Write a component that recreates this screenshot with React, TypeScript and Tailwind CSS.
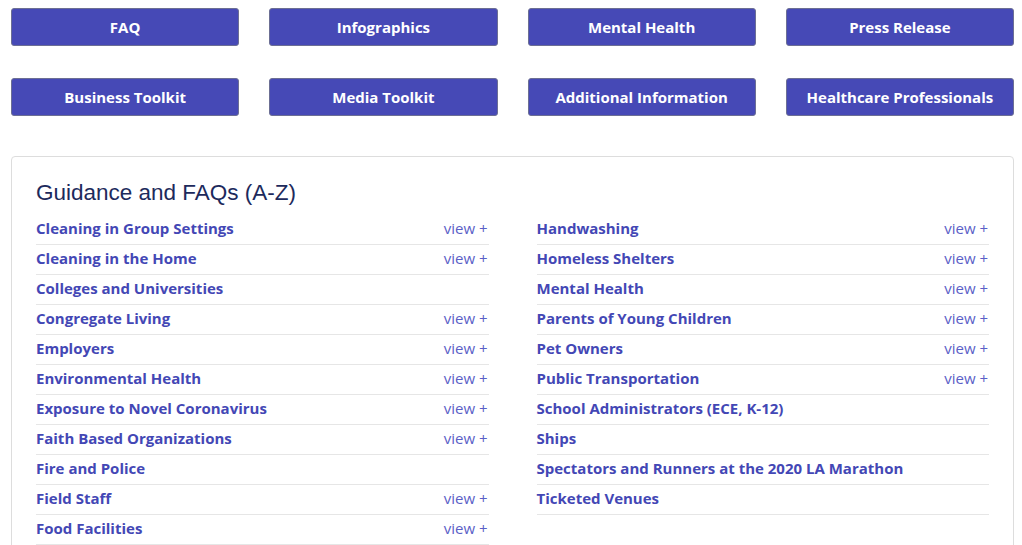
import React from "react";

const buttons = [
  "FAQ",
  "Infographics",
  "Mental Health",
  "Press Release",
  "Business Toolkit",
  "Media Toolkit",
  "Additional Information",
  "Healthcare Professionals",
];

type Item = { label: string; view?: boolean };

const left: Item[] = [
  { label: "Cleaning in Group Settings", view: true },
  { label: "Cleaning in the Home", view: true },
  { label: "Colleges and Universities" },
  { label: "Congregate Living", view: true },
  { label: "Employers", view: true },
  { label: "Environmental Health", view: true },
  { label: "Exposure to Novel Coronavirus", view: true },
  { label: "Faith Based Organizations", view: true },
  { label: "Fire and Police" },
  { label: "Field Staff", view: true },
  { label: "Food Facilities", view: true },
];

const right: Item[] = [
  { label: "Handwashing", view: true },
  { label: "Homeless Shelters", view: true },
  { label: "Mental Health", view: true },
  { label: "Parents of Young Children", view: true },
  { label: "Pet Owners", view: true },
  { label: "Public Transportation", view: true },
  { label: "School Administrators (ECE, K-12)" },
  { label: "Ships" },
  { label: "Spectators and Runners at the 2020 LA Marathon" },
  { label: "Ticketed Venues" },
];

function Column({ items }: { items: Item[] }) {
  return (
    <ul>
      {items.map((it) => (
        <li
          key={it.label}
          className="flex items-center justify-between h-[30px] border-b border-[#e6e6e6] pb-[3px]"
        >
          <a className="font-bold text-[15px] text-[#4347b5]">{it.label}</a>
          {it.view && <span className="text-[15px] text-[#5b5fc7] pr-[1px]">view +</span>}
        </li>
      ))}
    </ul>
  );
}

export default function App() {
  return (
    <div className="min-h-screen bg-white font-['Open_Sans',sans-serif] overflow-hidden">
      {/* top buttons */}
      <div className="ml-[11px] w-[1003px] pt-[8px] grid grid-cols-4 gap-x-[30px] gap-y-[32px]">
        {buttons.map((b) => (
          <button
            key={b}
            className="h-[38px] rounded-[3px] bg-[#4649b6] border border-[#6c6f94] text-white font-bold text-[15px]"
          >
            {b}
          </button>
        ))}
      </div>

      {/* guidance panel */}
      <section className="mt-[40px] ml-[11px] w-[1003px] border border-[#dddddd] rounded-[4px] px-[24px] pt-[21px] pb-6">
        <h2 className="font-['Liberation_Sans',Arial,sans-serif] text-[22.5px] text-[#1d2a5c] leading-[30px] mb-[7px]">
          Guidance and FAQs (A-Z)
        </h2>
        <div className="grid grid-cols-2 gap-x-[48px]">
          <Column items={left} />
          <Column items={right} />
        </div>
      </section>
    </div>
  );
}
